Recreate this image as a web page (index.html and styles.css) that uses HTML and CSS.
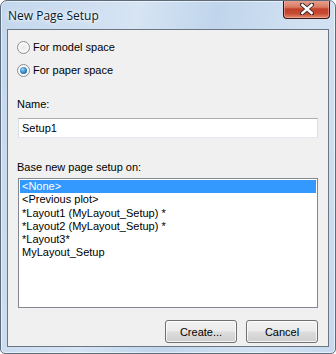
FILE: index.html
```html
<!DOCTYPE html>
<html lang="en">
<head>
<meta charset="UTF-8" />
<title>New Page Setup</title>
<link rel="stylesheet" href="styles.css">
</head>
<body>

  <!-- Dialog window frame -->
  <div class="window">
    <div class="titlebar">
      <span class="title">New Page Setup</span>
      <div class="close-btn" title="Close">
        <svg viewBox="0 0 14 12" width="14" height="12" aria-hidden="true">
          <path d="M2 1.5 L12 10.5 M12 1.5 L2 10.5" stroke="#3a2a28" stroke-width="4.2" stroke-linecap="square" />
          <path d="M2.4 2 L11.6 10 M11.6 2 L2.4 10" stroke="#ffffff" stroke-width="2.4" stroke-linecap="square" />
        </svg>
      </div>
    </div>

    <!-- Client area -->
    <div class="client">
      <div class="radio-group">
        <label class="radio"><span class="radio-dot"></span>For model space</label>
        <label class="radio checked"><span class="radio-dot"></span>For paper space</label>
      </div>

      <div class="label name-label">Name:</div>
      <div class="textbox">Setup1</div>

      <div class="label base-label">Base new page setup on:</div>
      <ul class="listbox">
        <li class="selected">&lt;None&gt;</li>
        <li>&lt;Previous plot&gt;</li>
        <li>*Layout1 (MyLayout_Setup) *</li>
        <li>*Layout2 (MyLayout_Setup) *</li>
        <li>*Layout3*</li>
        <li>MyLayout_Setup</li>
      </ul>

      <div class="btn-row">
        <button class="btn">Create...</button>
        <button class="btn">Cancel</button>
      </div>
    </div>
  </div>

</body>
</html>
```
FILE: styles.css
```css
/* Base */
body {
  margin: 0;
  padding: 0;
  background: #ffffff;
  font-family: 'Liberation Sans', Arial, sans-serif;
  font-size: 11px;
  color: #000000;
}

/* Aero style window frame */
.window {
  width: 336px;
  height: 354px;
  box-sizing: border-box;
  border: 1px solid #5d6b7a;
  border-radius: 7px 7px 5px 5px;
  background: linear-gradient(100deg, #c3d7ed 0%, #d6e4f3 35%, #c0d5ec 55%, #d3e2f2 80%, #c6d9ee 100%);
  box-shadow: inset 0 0 0 1px rgba(255, 255, 255, 0.55);
  display: flex;
  flex-direction: column;
  overflow: hidden;
}

.titlebar {
  height: 28px;
  display: flex;
  align-items: flex-start;
  justify-content: space-between;
  flex-shrink: 0;
}

.title {
  font-family: 'Open Sans', 'Noto Sans', sans-serif;
  font-size: 12px;
  color: #0b1a2c;
  padding: 6px 0 0 7px;
  text-shadow: 0 0 6px #ffffff, 0 0 3px #ffffff;
}

/* Red close button */
.close-btn {
  width: 47px;
  height: 19px;
  margin: -1px 5px 0 0;
  box-sizing: border-box;
  border: 1px solid #3b1510;
  border-top: none;
  border-radius: 0 0 4px 4px;
  background: linear-gradient(#e8a493 0%, #d97a62 40%, #c2402a 50%, #c64a32 75%, #e08b6e 100%);
  box-shadow: inset 0 0 0 1px rgba(255, 200, 190, 0.45);
  display: flex;
  align-items: center;
  justify-content: center;
}

/* Grey dialog body */
.client {
  flex: 1;
  margin: 0 6px 6px 6px;
  border: 1px solid #6a7684;
  background: #f0f0f0;
  display: flex;
  flex-direction: column;
  padding: 0 10px 0 9px;
}

.radio-group {
  display: flex;
  flex-direction: column;
  gap: 7px;
  margin-top: 9px;
}

.radio {
  display: flex;
  align-items: center;
  height: 16px;
  gap: 3px;
}

.radio-dot {
  width: 13px;
  height: 13px;
  box-sizing: border-box;
  border-radius: 50%;
  border: 1px solid #8c8c8c;
  background: radial-gradient(circle at 50% 50%, #e8e8e8 0%, #f4f4f4 45%, #ffffff 80%);
  position: relative;
}

.radio.checked .radio-dot::after {
  content: "";
  position: absolute;
  left: 2px;
  top: 2px;
  width: 7px;
  height: 7px;
  border-radius: 50%;
  background: radial-gradient(circle at 40% 35%, #9ad8fa 0%, #3f8fd0 45%, #124a86 100%);
}

.label {
  height: 14px;
  line-height: 14px;
}

.name-label {
  margin-top: 19px;
}

.textbox {
  margin: 7px 0 0 1px;
  height: 20px;
  box-sizing: border-box;
  border: 1px solid #abadb3;
  border-left-color: #dbdfe6;
  border-right-color: #dbdfe6;
  border-bottom-color: #e3e9ef;
  background: #ffffff;
  padding: 0 3px;
  line-height: 18px;
}

.base-label {
  margin-top: 22px;
}

.listbox {
  list-style: none;
  margin: 4px 0 0 1px;
  padding: 1px 1px;
  height: 130px;
  box-sizing: border-box;
  border: 1px solid #828790;
  background: #ffffff;
}

.listbox li {
  height: 13.3px;
  line-height: 13.3px;
  padding-left: 2px;
  white-space: nowrap;
}

.listbox li.selected {
  background: #3399ff;
  color: #ffffff;
}

.btn-row {
  display: flex;
  justify-content: flex-end;
  gap: 9px;
  margin-top: 12px;
}

/* Windows 7 style push button */
.btn {
  width: 72px;
  height: 23px;
  box-sizing: border-box;
  border: 1px solid #707070;
  border-radius: 3px;
  background: linear-gradient(#f2f2f2 0%, #ebebeb 48%, #dddddd 52%, #cfcfcf 100%);
  box-shadow: inset 0 0 0 1px rgba(255, 255, 255, 0.8);
  font-family: 'Liberation Sans', Arial, sans-serif;
  font-size: 11px;
  color: #000000;
  padding: 0;
}
```
